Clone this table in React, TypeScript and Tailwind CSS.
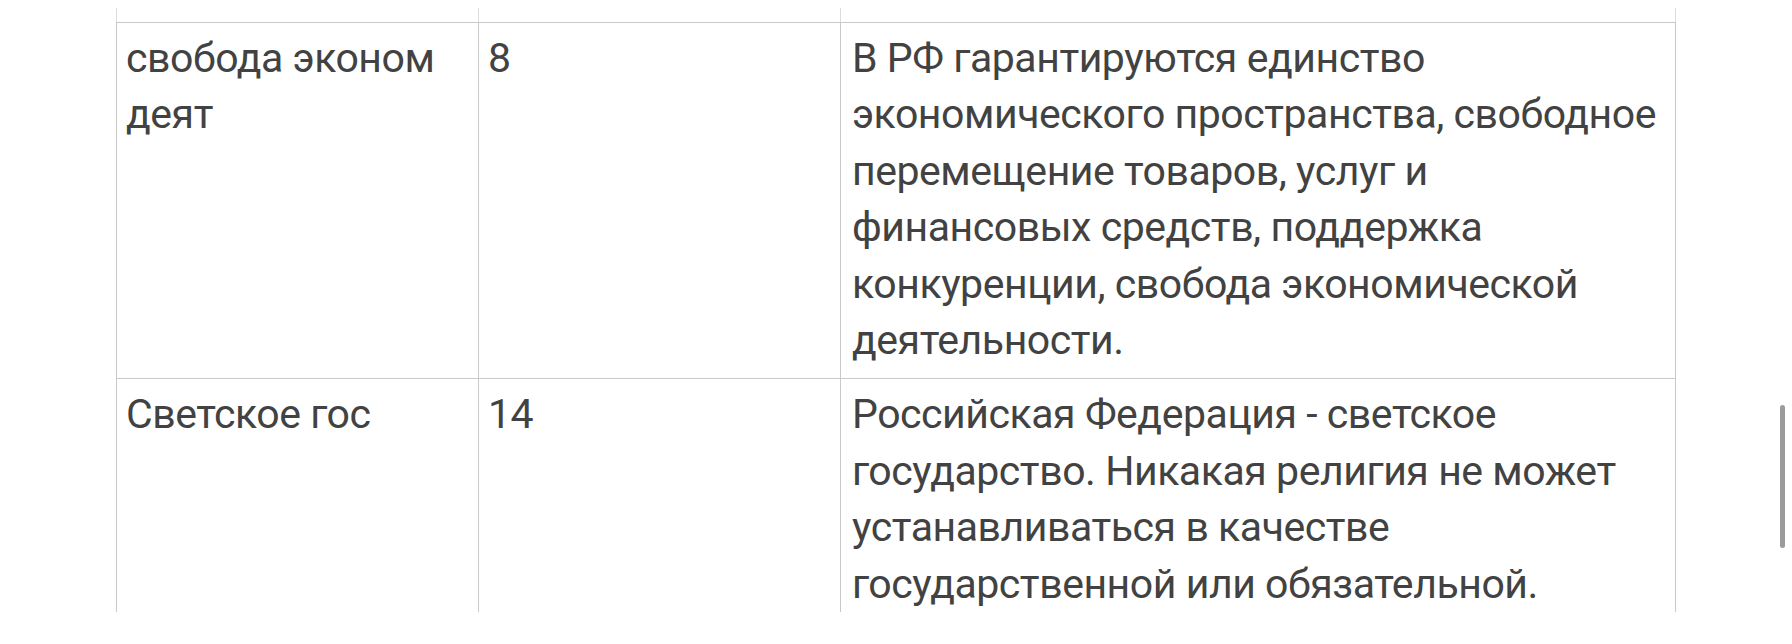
import React from 'react';

type Row = {
  topic: string[];
  article: string;
  text: string[];
};

const rows: Row[] = [
  {
    topic: ['свобода эконом', 'деят'],
    article: '8',
    text: [
      'В РФ гарантируются единство',
      'экономического пространства, свободное',
      'перемещение товаров, услуг и',
      'финансовых средств, поддержка',
      'конкуренции, свобода экономической',
      'деятельности.',
    ],
  },
  {
    topic: ['Светское гос'],
    article: '14',
    text: [
      'Российская Федерация - светское',
      'государство. Никакая религия не может',
      'устанавливаться в качестве',
      'государственной или обязательной.',
    ],
  },
];

function Lines({ lines }: { lines: string[] }) {
  return (
    <div>
      {lines.map((l, i) => (
        <div key={i} className="whitespace-nowrap">
          {l}
        </div>
      ))}
    </div>
  );
}

export default function App() {
  const cell = 'border-l border-t border-[#c9c9c9] pr-2 pt-[7px] pb-[10px]';

  return (
    <div className="relative h-[644px] w-full overflow-hidden bg-white font-['Roboto','Inter',sans-serif] text-[41px] leading-[56.4px] tracking-[-0.45px] text-[#424242]">
      <div className="pl-[116px] pt-[8px]">
        <div className="grid w-[1560px] grid-cols-[362px_362px_836px]">
          {/* хвост предыдущей строки */}
          <div className="h-[14px] border-l border-[#dcdcdc]" />
          <div className="h-[14px] border-l border-[#dcdcdc]" />
          <div className="h-[14px] border-x border-[#dcdcdc]" />

          {rows.map((r, i) => (
            <React.Fragment key={i}>
              <div className={`${cell} pl-[9px]`}>
                <Lines lines={r.topic} />
              </div>
              <div className={`${cell} pl-[9px]`}>
                <div>{r.article}</div>
              </div>
              <div className={`${cell} border-r pl-[11px]`}>
                <Lines lines={r.text} />
              </div>
            </React.Fragment>
          ))}
        </div>
      </div>

      {/* полоса прокрутки */}
      <div className="absolute left-[1780px] top-[405px] h-[143px] w-[5px] rounded-full bg-[#9b9b9b]" />
      {/* низ экрана */}
      <div className="absolute bottom-0 left-0 h-[32px] w-full bg-white" />
    </div>
  );
}
